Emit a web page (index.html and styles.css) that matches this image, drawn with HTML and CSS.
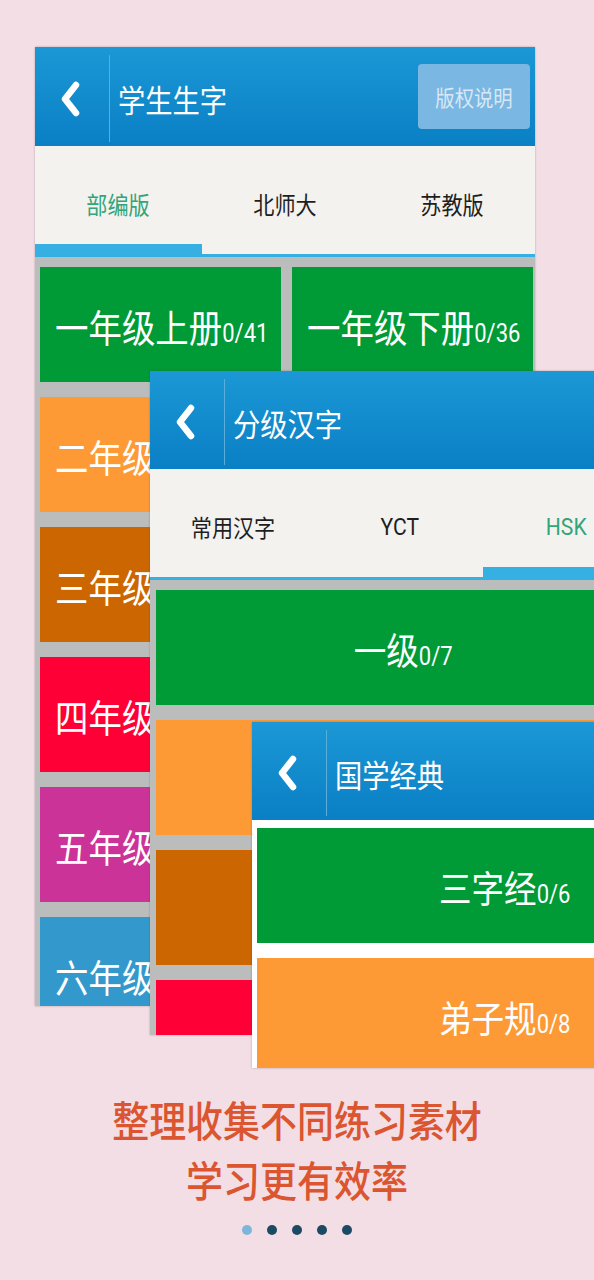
FILE: index.html
```html
<!DOCTYPE html>
<html lang="zh-CN">
<head>
<meta charset="utf-8">
<title>学生生字</title>
<link rel="stylesheet" href="styles.css">
</head>
<body>
<div class="stage">
  <section class="screen s1">
    <header class="bar">
      <span class="back"><svg viewBox="0 0 22 36" width="22" height="36"><path d="M17 4 L6 18 L17 32" fill="none" stroke="#fff" stroke-width="6.5" stroke-linecap="round" stroke-linejoin="round"/></svg></span>
      <h1 class="title"><span class="sq">学生生字</span></h1>
      <button class="copyright"><span class="sq">版权说明</span></button>
    </header>
    <nav class="tabs">
      <div class="tab active"><span class="sq">部编版</span></div>
      <div class="tab"><span class="sq">北师大</span></div>
      <div class="tab"><span class="sq">苏教版</span></div>
    </nav>
    <div class="indicator"><i class="ind-bar"></i></div>
    <div class="grid two">
      <div class="tile green"><span class="sq">一年级上册<small>0/41</small></span></div>
      <div class="tile green"><span class="sq">一年级下册<small>0/36</small></span></div>
      <div class="tile orange"><span class="sq">二年级上册</span></div>
      <div class="tile orange"></div>
      <div class="tile brown"><span class="sq">三年级上册</span></div>
      <div class="tile brown"></div>
      <div class="tile red"><span class="sq">四年级上册</span></div>
      <div class="tile red"></div>
      <div class="tile magenta"><span class="sq">五年级上册</span></div>
      <div class="tile magenta"></div>
      <div class="tile blue"><span class="sq">六年级上册</span></div>
      <div class="tile blue"></div>
    </div>
  </section>

  <section class="screen s2">
    <header class="bar">
      <span class="back"><svg viewBox="0 0 22 36" width="22" height="36"><path d="M17 4 L6 18 L17 32" fill="none" stroke="#fff" stroke-width="6.5" stroke-linecap="round" stroke-linejoin="round"/></svg></span>
      <h1 class="title"><span class="sq">分级汉字</span></h1>
    </header>
    <nav class="tabs">
      <div class="tab"><span class="sq">常用汉字</span></div>
      <div class="tab"><span class="sq">YCT</span></div>
      <div class="tab active"><span class="sq">HSK</span></div>
    </nav>
    <div class="indicator end"><i class="ind-bar"></i></div>
    <div class="grid one">
      <div class="tile green center"><span class="sq">一级<small>0/7</small></span></div>
      <div class="tile orange center"></div>
      <div class="tile brown center"></div>
      <div class="tile red center"></div>
    </div>
  </section>

  <section class="screen s3">
    <header class="bar">
      <span class="back"><svg viewBox="0 0 22 36" width="22" height="36"><path d="M17 4 L6 18 L17 32" fill="none" stroke="#fff" stroke-width="6.5" stroke-linecap="round" stroke-linejoin="round"/></svg></span>
      <h1 class="title"><span class="sq">国学经典</span></h1>
    </header>
    <div class="grid one white">
      <div class="tile green center"><span class="sq">三字经<small>0/6</small></span></div>
      <div class="tile orange center"><span class="sq">弟子规<small>0/8</small></span></div>
    </div>
  </section>
</div>

<div class="caption">
  <div class="line"><span class="sq">整理收集不同练习素材</span></div>
  <div class="line"><span class="sq">学习更有效率</span></div>
</div>

<div class="dots">
  <i class="dot on"></i><i class="dot"></i><i class="dot"></i><i class="dot"></i><i class="dot"></i>
</div>
</body>
</html>
```

FILE: styles.css
```css
html, body {
  margin: 0;
  padding: 0;
}
body {
  background: #f2dee4;
  font-family: Roboto, "Noto Sans CJK SC", sans-serif;
  overflow-x: hidden;
  width: 594px;
}

.sq {
  display: inline-block;
  white-space: nowrap;
  transform: scaleX(0.88);
  transform-origin: center center;
}

.stage {
  position: relative;
  height: 1093px;
  overflow: hidden;
}

.screen {
  position: absolute;
  width: 500px;
  overflow: hidden;
  display: flex;
  flex-direction: column;
  box-shadow: 0 0 2px rgba(60, 60, 60, 0.35);
}
.s1 { left: 35px; top: 47px; height: 959px; background: #babdbc; }
.s2 { left: 150px; top: 371px; height: 664px; background: #babdbc; }
.s3 { left: 252px; top: 722px; height: 346px; background: #ffffff; }

/* header bar */
.bar {
  flex: none;
  height: 99px;
  display: flex;
  align-items: center;
  background: linear-gradient(#1b98d5, #0a7fc5);
  padding-right: 5px;
  box-sizing: border-box;
}
.s2 .bar, .s3 .bar { height: 98px; }
.back {
  flex: none;
  width: 75px;
  display: flex;
  justify-content: center;
  align-items: center;
  align-self: stretch;
  border-right: 1px solid #5aaedc;
  margin: 8px 0 4px;
  box-sizing: border-box;
}
.back svg { display: block; margin-left: -4px; }
.title {
  flex: 1;
  margin: 0 0 0 8px;
  padding-top: 4px;
  font-size: 31px;
  font-weight: 400;
  color: #ffffff;
}
.title .sq { transform-origin: left center; }
.copyright {
  flex: none;
  width: 112px;
  height: 65px;
  margin-top: -1px;
  border: none;
  border-radius: 4px;
  background: #7bb7e3;
  color: #d9e8f4;
  font-family: Roboto, "Noto Sans CJK SC", sans-serif;
  font-size: 22px;
  padding: 0;
}

/* tabs */
.tabs {
  flex: none;
  height: 98px;
  display: grid;
  grid-template-columns: 1fr 1fr 1fr;
  background: #f4f2ef;
}
.tab {
  display: flex;
  justify-content: center;
  align-items: center;
  padding-top: 17px;
  font-size: 24px;
  color: #1e1e1e;
}
.tab.active { color: #32a57b; }

.indicator {
  flex: none;
  height: 13px;
  box-sizing: border-box;
  border-bottom: 3px solid #36afe3;
  background: #f4f2ef;
  display: flex;
}
.indicator.end { justify-content: flex-end; }
.ind-bar {
  width: 33.4%;
  height: 10px;
  background: #36afe3;
}

/* tiles */
.grid {
  display: grid;
  grid-auto-rows: 115px;
  row-gap: 15px;
}
.grid.two {
  grid-template-columns: 241px 241px;
  column-gap: 11px;
  padding: 10px 0 0 5px;
}
.grid.one {
  grid-template-columns: 1fr;
  padding: 10px 0 0 6px;
}
.grid.one.white {
  padding: 8px 0 0 5px;
}
.tile {
  display: flex;
  align-items: center;
  padding-left: 15px;
  padding-top: 2px;
  box-sizing: border-box;
  color: #ffffff;
  font-size: 38px;
  overflow: hidden;
}
.tile .sq { transform-origin: left center; }
.tile small {
  font-size: 25px;
}
.tile.center {
  justify-content: center;
  padding-left: 0;
  font-size: 37px;
}
.tile.center .sq { transform-origin: center center; }

.green { background: #009a36; }
.orange { background: #fe9a36; }
.brown { background: #cc6600; }
.red { background: #ff0036; }
.magenta { background: #cc3399; }
.blue { background: #3399cc; }

/* caption */
.caption {
  text-align: center;
  color: #da5530;
  font-size: 42px;
  font-weight: 500;
  line-height: 60px;
}
.line { height: 60px; }

.dots {
  display: flex;
  justify-content: center;
  gap: 15px;
  margin-top: 12px;
}
.dot {
  display: block;
  width: 10px;
  height: 10px;
  border-radius: 50%;
  background: #1c4a63;
}
.dot.on { background: #7cb6da; }
```
